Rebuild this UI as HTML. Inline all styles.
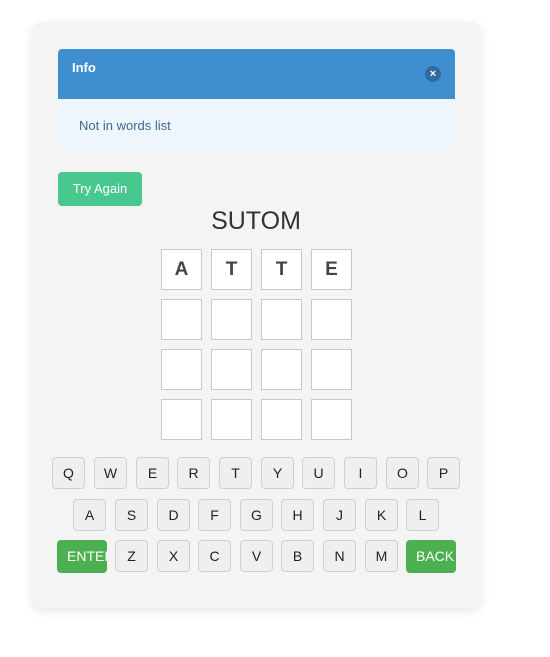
<!DOCTYPE html>
<html><head><meta charset="utf-8"><style>
*{box-sizing:border-box;margin:0;padding:0}
body{width:550px;height:657px;background:#fff;font-family:"Liberation Sans",sans-serif;position:relative;overflow:hidden}
.card{position:absolute;left:32px;top:22px;width:449px;height:586px;background:#f4f4f4;border-radius:10px;box-shadow:0 3px 10px rgba(0,0,0,0.1)}
.hdr{position:absolute;left:58px;top:49px;width:397px;height:50px;background:#3e8ed0;border-radius:4px 4px 0 0;color:#fff;font-weight:bold;font-size:13px;padding:11px 14px}
.cls{position:absolute;left:425px;top:66px;width:16px;height:16px;border-radius:50%;background:#2f6aa0;color:#fff;font-size:11px;font-weight:bold;text-align:center;line-height:16px}
.bd{position:absolute;left:58px;top:99px;width:397px;height:52px;background:#eef5fc;border-radius:0 0 4px 4px;color:#3a6a99;font-size:13px;padding:19px 21px}
.try{position:absolute;left:58px;top:172px;width:84px;height:34px;background:#48c78e;border-radius:4px;color:#fff;font-size:13px;text-align:center;line-height:34px}
.title{position:absolute;left:0;width:512px;top:207px;text-align:center;font-size:25px;color:#333}
.c{position:absolute;width:41px;height:41px;background:#fff;border:1px solid #c8c8c8;text-align:center;line-height:40px;font-size:19px;font-weight:bold;color:#444}
.k{position:absolute;width:33px;height:32px;background:#efefef;border:1px solid #cfcfcf;border-radius:4px;text-align:center;line-height:31px;font-size:14px;color:#222}
.g{position:absolute;height:33px;width:50px;background:#4caf50;border-radius:4px;color:#fff;font-size:14px;line-height:33px;overflow:hidden;white-space:nowrap}
</style></head><body>
<div class="card"></div>
<div class="hdr">Info</div>
<div class="cls">×</div>
<div class="bd">Not in words list</div>
<div class="try">Try Again</div>
<div class="title">SUTOM</div>

<div class="c" style="left:161px;top:249px">A</div>
<div class="c" style="left:211px;top:249px">T</div>
<div class="c" style="left:261px;top:249px">T</div>
<div class="c" style="left:311px;top:249px">E</div>
<div class="c" style="left:161px;top:299px"></div><div class="c" style="left:211px;top:299px"></div><div class="c" style="left:261px;top:299px"></div><div class="c" style="left:311px;top:299px"></div>
<div class="c" style="left:161px;top:349px"></div><div class="c" style="left:211px;top:349px"></div><div class="c" style="left:261px;top:349px"></div><div class="c" style="left:311px;top:349px"></div>
<div class="c" style="left:161px;top:399px"></div><div class="c" style="left:211px;top:399px"></div><div class="c" style="left:261px;top:399px"></div><div class="c" style="left:311px;top:399px"></div>

<div class="k" style="left:52px;top:457px">Q</div>
<div class="k" style="left:94px;top:457px">W</div>
<div class="k" style="left:136px;top:457px">E</div>
<div class="k" style="left:177px;top:457px">R</div>
<div class="k" style="left:219px;top:457px">T</div>
<div class="k" style="left:261px;top:457px">Y</div>
<div class="k" style="left:302px;top:457px">U</div>
<div class="k" style="left:344px;top:457px">I</div>
<div class="k" style="left:386px;top:457px">O</div>
<div class="k" style="left:427px;top:457px">P</div>

<div class="k" style="left:73px;top:499px">A</div>
<div class="k" style="left:115px;top:499px">S</div>
<div class="k" style="left:157px;top:499px">D</div>
<div class="k" style="left:198px;top:499px">F</div>
<div class="k" style="left:240px;top:499px">G</div>
<div class="k" style="left:281px;top:499px">H</div>
<div class="k" style="left:323px;top:499px">J</div>
<div class="k" style="left:365px;top:499px">K</div>
<div class="k" style="left:406px;top:499px">L</div>

<div class="g" style="left:57px;top:540px;padding-left:10px">ENTER</div>
<div class="k" style="left:115px;top:540px">Z</div>
<div class="k" style="left:157px;top:540px">X</div>
<div class="k" style="left:198px;top:540px">C</div>
<div class="k" style="left:240px;top:540px">V</div>
<div class="k" style="left:281px;top:540px">B</div>
<div class="k" style="left:323px;top:540px">N</div>
<div class="k" style="left:365px;top:540px">M</div>
<div class="g" style="left:406px;top:540px;padding-left:10px">BACK</div>
</body></html>
